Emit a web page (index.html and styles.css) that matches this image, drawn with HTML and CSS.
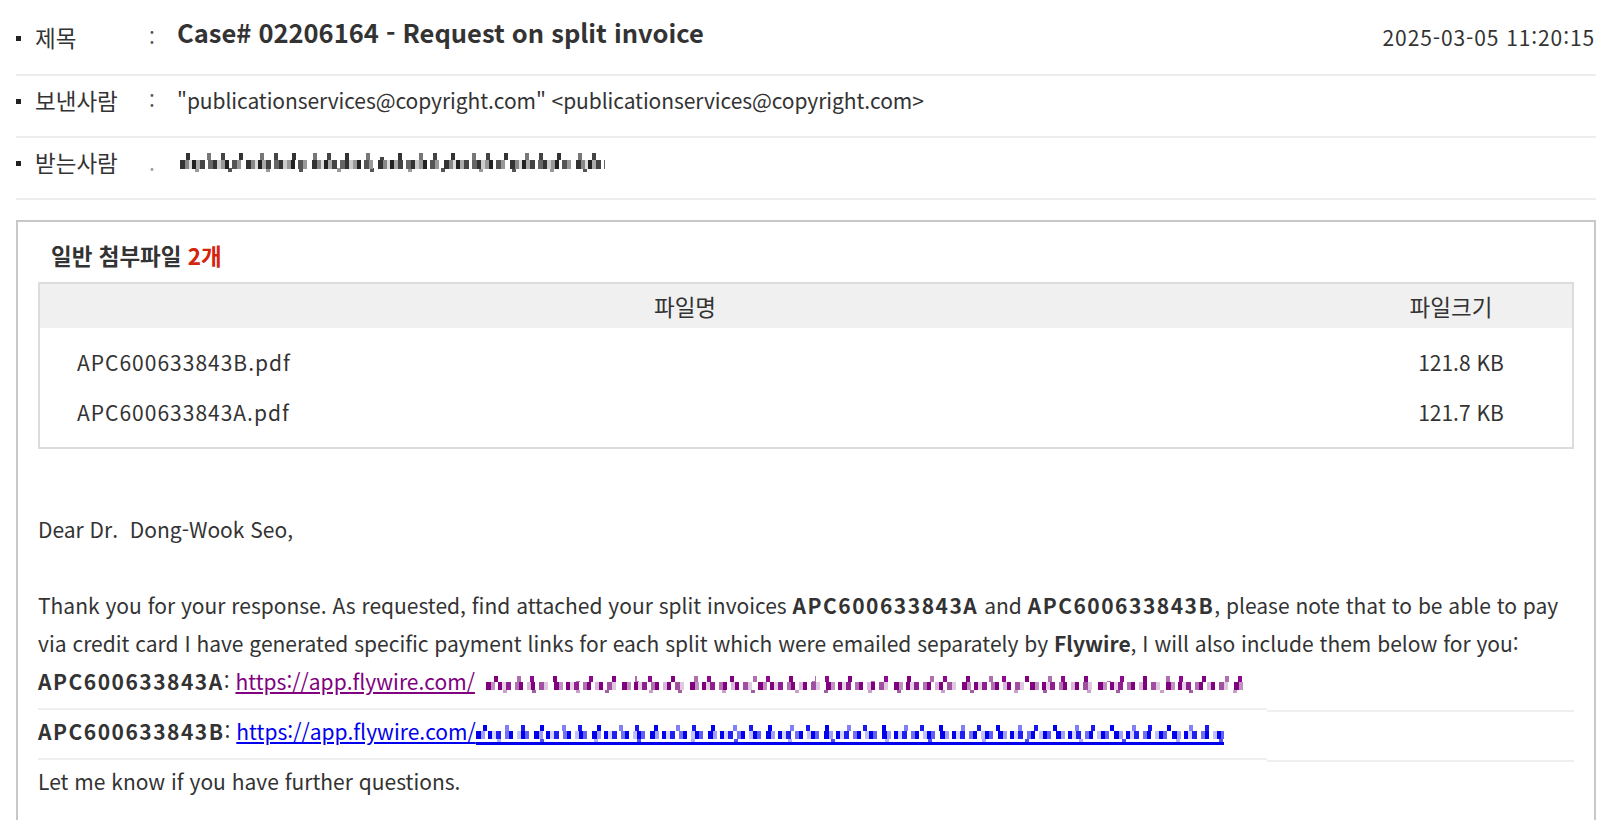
FILE: index.html
```html
<!DOCTYPE html>
<html lang="ko">
<head>
<meta charset="utf-8">
<title>Case# 02206164 - Request on split invoice</title>
<link rel="stylesheet" href="styles.css">
</head>
<body>
<div class="mail">
  <div class="hdr">
    <div class="hrow first">
      <span class="bullet"></span>
      <span class="lbl">제목</span>
      <span class="colon">:</span>
      <span class="subject">Case# 02206164 - Request on split invoice</span>
      <span class="date">2025-03-05 11:20:15</span>
    </div>
    <div class="hrow">
      <span class="bullet"></span>
      <span class="lbl">보낸사람</span>
      <span class="colon">:</span>
      <span class="val">"publicationservices@copyright.com" &lt;publicationservices@copyright.com&gt;</span>
    </div>
    <div class="hrow">
      <span class="bullet"></span>
      <span class="lbl">받는사람</span>
      <span class="colon dim">.</span>
      <span class="mosaic mosaic-gray mosaic-rcpt" title="받는사람 주소 (가림)"></span>
    </div>
  </div>

  <div class="frame">
    <div class="att-title">일반 첨부파일 <em>2개</em></div>
    <table class="att-table">
      <thead>
        <tr><th class="c-name">파일명</th><th class="c-size">파일크기</th></tr>
      </thead>
      <tbody>
        <tr class="r-first"><td class="c-name">APC600633843B.pdf</td><td class="c-size">121.8 KB</td></tr>
        <tr class="r-last"><td class="c-name">APC600633843A.pdf</td><td class="c-size">121.7 KB</td></tr>
      </tbody>
    </table>

    <div class="body">
      <p class="para">Dear Dr.&nbsp; Dong-Wook Seo,</p>
      <p class="para">&nbsp;</p>
      <p class="para">Thank you for your response. As requested, find attached your split invoices <b class="code">APC600633843A</b> and <b class="code">APC600633843B</b>, please note that to be able to pay<br>via credit card I have generated specific payment links for each split which were emailed separately by <b>Flywire</b>, I will also include them below for you:</p>
      <div class="lrow">
        <div class="seg-l"><b class="code">APC600633843A</b>: <a class="visited" href="#">https://app.flywire.com/</a> <span class="mosaic mosaic-purple mosaic-a"></span></div>
        <div class="seg-r"></div>
      </div>
      <div class="lrow">
        <div class="seg-l"><b class="code">APC600633843B</b>: <a class="fresh" href="#">https://app.flywire.com/<span class="mosaic mosaic-blue mosaic-b"></span></a></div>
        <div class="seg-r"></div>
      </div>
      <p class="para">Let me know if you have further questions.</p>
    </div>
  </div>
</div>
</body>
</html>
```

FILE: styles.css
```css
html, body {
  margin: 0;
  padding: 0;
  background: #fff;
}
body {
  font-family: "Noto Sans CJK KR", "Noto Sans", sans-serif;
  font-size: 21px;
  color: #333;
  width: 1620px;
  height: 820px;
  overflow: hidden;
}
.mail {
  margin-left: 16px;
  width: 1580px;
}
.hdr {
  display: flex;
  flex-direction: column;
}
.hrow {
  display: flex;
  align-items: center;
  line-height: 26px;
  padding: 11px 0 23px;
  border-bottom: 2px solid #ededed;
}
.hrow.first {
  padding: 24px 0 24px;
}
.bullet {
  width: 5px;
  height: 5px;
  background: #222;
  margin-right: 15px;
  margin-top: 3px;
  flex: none;
}
.lbl {
  width: 113px;
  flex: none;
  font-size: 22.5px;
  margin-left: -1px;
  margin-right: 1px;
}
.colon {
  width: 28px;
  flex: none;
  color: #555;
}
.colon.dim {
  color: #9a9a9a;
}
.subject {
  font-weight: 700;
  font-size: 25.5px;
  margin-top: -10px;
}
.val {
  letter-spacing: -0.08px;
}
.date {
  margin-left: auto;
  margin-right: 1px;
  letter-spacing: 0.9px;
}

/* pixel mosaic used to hide addresses */
.mosaic {
  display: inline-block;
  height: 18px;
  vertical-align: middle;
  background-repeat: no-repeat;
}
.mosaic-gray {
  height: 20px;
  background-image:
    linear-gradient(90deg, transparent 0 196px, #fff 196px 206px, transparent 206px),
    repeating-linear-gradient(90deg, transparent 0 6px, #333 6px 10px, transparent 10px 27px, #777 27px 31px, transparent 31px 41px, #444 41px 45px, transparent 45px 53px),
    repeating-linear-gradient(90deg, #333 0 5px, #888 5px 9px, #ddd 9px 12px, #222 12px 16px, #aaa 16px 20px, #444 20px 25px, transparent 25px 28px, #666 28px 33px, #333 33px 37px, #ccc 37px 41px, #999 41px 45px, #222 45px 49px, transparent 49px 52px, #555 52px 57px, #999 57px 61px, transparent 61px 66px),
    repeating-linear-gradient(90deg, transparent 0 15px, #999 15px 19px, transparent 19px 48px, #555 48px 52px, transparent 52px 71px);
  background-size: 100% 5px, 100% 7px, 100% 9px, 100% 4px;
  background-position: 0 0, 0 1px, 0 8px, 0 16px;
}
.mosaic-rcpt {
  width: 425px;
  margin-left: 3px;
}
.mosaic-purple {
  background-image:
    repeating-linear-gradient(90deg, transparent 0 84px, #fff 84px 96px, transparent 96px 151px, #fff 151px 160px, transparent 160px 233px),
    repeating-linear-gradient(90deg, transparent 0 8px, #800080 8px 12px, transparent 12px 31px, #b070b0 31px 35px, transparent 35px 44px, #900890 44px 48px, transparent 48px 59px),
    repeating-linear-gradient(90deg, #800080 0 5px, #c090c0 5px 9px, transparent 9px 12px, #800080 12px 16px, #e6d0e6 16px 20px, #902090 20px 25px, transparent 25px 29px, #b070b0 29px 33px, #800080 33px 37px, transparent 37px 41px, #d8b8d8 41px 45px, #800080 45px 49px, transparent 49px 53px, #a050a0 53px 58px, #e0c8e0 58px 62px, transparent 62px 68px),
    repeating-linear-gradient(90deg, transparent 0 17px, #c8a0c8 17px 21px, transparent 21px 46px, #a060a0 46px 50px, transparent 50px 73px);
  background-size: 100% 6px, 100% 6px, 100% 8px, 100% 4px;
  background-position: 0 0, 0 1px, 0 7px, 0 15px;
}
.mosaic-a {
  width: 759px;
  margin-left: 5px;
}
.mosaic-blue {
  background-image:
    repeating-linear-gradient(90deg, transparent 0 7px, #0000ee 7px 11px, transparent 11px 29px, #8080f8 29px 33px, transparent 33px 45px, #1a1aee 45px 49px, transparent 49px 57px),
    repeating-linear-gradient(90deg, #0000ee 0 5px, #a0a0f8 5px 9px, transparent 9px 12px, #0000ee 12px 16px, #d4d4ff 16px 20px, #2020f0 20px 25px, transparent 25px 29px, #7070f0 29px 33px, #0000ee 33px 37px, transparent 37px 41px, #c0c0fc 41px 45px, #0000ee 45px 49px, #6060f4 49px 53px, transparent 53px 58px),
    repeating-linear-gradient(90deg, transparent 0 21px, #b0b0fa 21px 25px, transparent 25px 64px, #5050f2 64px 68px, transparent 68px 97px);
  background-size: 100% 6px, 100% 8px, 100% 3px;
  background-position: 0 1px, 0 7px, 0 15px;
  border-bottom: 3px solid #0000ee;
  box-sizing: border-box;
}
.mosaic-b {
  width: 748px;
  height: 21px;
}

/* frame with attachments and body */
.frame {
  box-sizing: border-box;
  margin-top: 20px;
  border: 2px solid #c8c8c8;
  border-bottom: 0;
  padding: 18px 20px 0;
  height: 600px;
}
.att-title {
  font-weight: 700;
  font-size: 22.5px;
  line-height: 30px;
  color: #333;
  padding-left: 13px;
}
.att-title em {
  font-style: normal;
  color: #d4240c;
}
.att-table {
  margin-top: 12px;
  width: 100%;
  border: 2px solid #dcdcdc;
  border-spacing: 0;
  line-height: 26px;
}
.att-table th {
  background: #f0f0f0;
  font-weight: 400;
  font-size: 22.5px;
  padding: 9px 0;
  text-align: center;
}
.att-table th.c-size {
  width: 242px;
}
.att-table td {
  padding: 12px 0;
}
.att-table td.c-name {
  padding-left: 37px;
  letter-spacing: 1px;
}
.att-table td.c-size {
  text-align: center;
  padding-left: 20px;
}
.att-table tr.r-first td {
  padding-top: 21px;
}
.att-table tr.r-last td {
  padding-bottom: 22px;
}

.body {
  margin-top: 61px;
  line-height: 38px;
}
.para {
  margin: 0;
}
.code {
  letter-spacing: 1.5px;
}
.lrow {
  display: flex;
}
.seg-l {
  width: 1229px;
  flex: none;
  white-space: nowrap;
  padding-bottom: 8px;
  border-bottom: 2px solid #efefef;
  margin-bottom: 2px;
}
.seg-r {
  flex: 1;
  border-bottom: 2px solid #efefef;
}
a.visited {
  color: #800080;
}
a.fresh {
  color: #0000ee;
}
```
